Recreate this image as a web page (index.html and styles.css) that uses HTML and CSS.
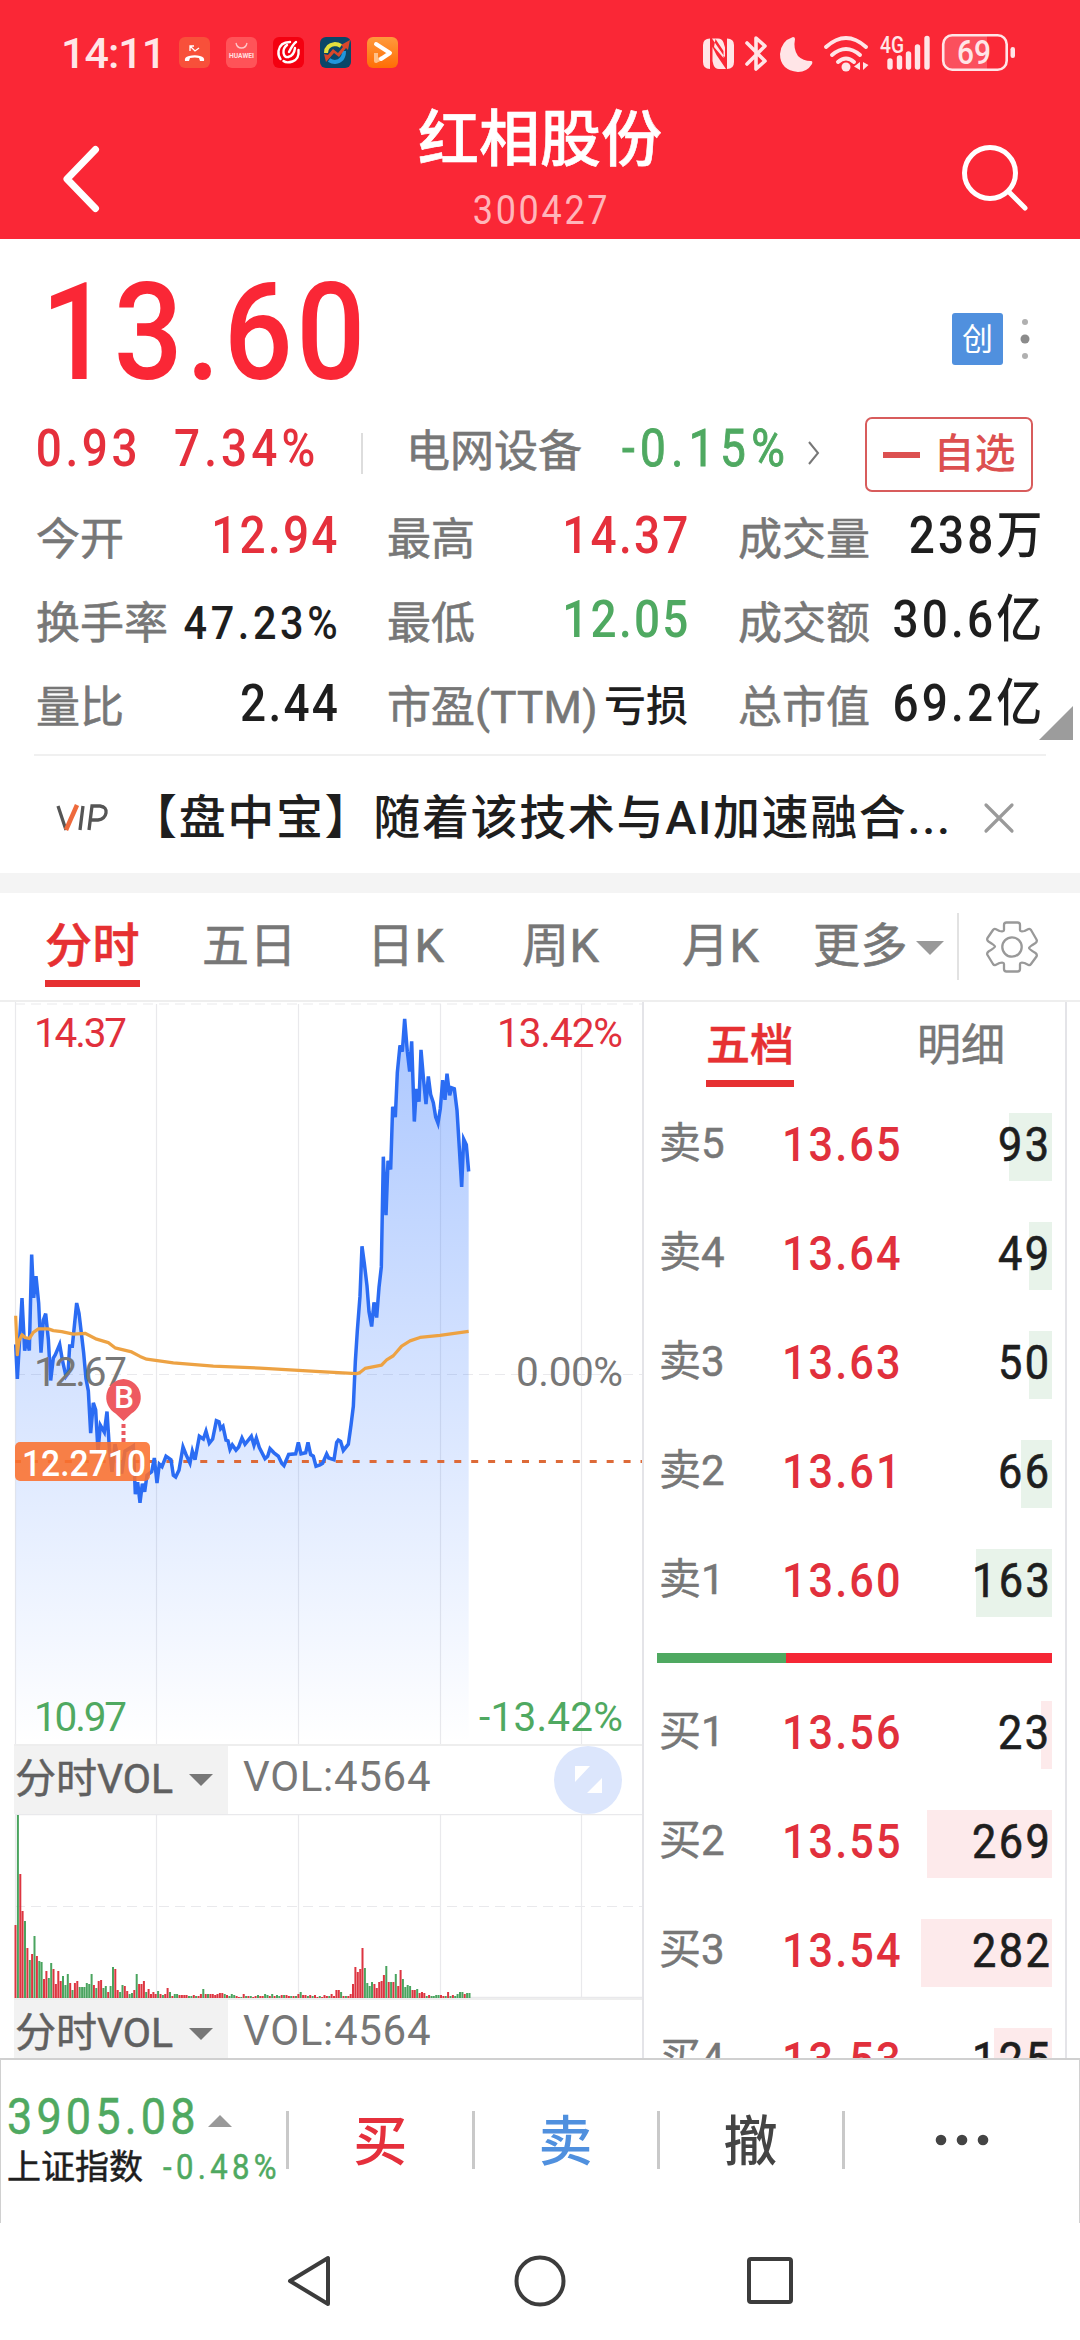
FILE: index.html
```html
<!DOCTYPE html>
<html lang="zh-CN">
<head>
<meta charset="utf-8">
<title>红相股份 300427</title>
<link rel="stylesheet" href="styles.css">
</head>
<body>
<div class="screen">
  <header class="header">
    <div class="status">
      <span class="clock">14:11</span>
      <div class="apps">
        <svg class="app" viewBox="0 0 31 31"><rect width="31" height="31" rx="6" fill="#f8503a"/><path d="M11 14V9h4M11 9l5 5 4-3" fill="none" stroke="#fff" stroke-width="1.3"/><path d="M6 24q-1-4 4-5 6-1.500 11 0 5 1 4 5h-4l-1-3q-4-1-9 0l-1 3z" fill="#fff"/></svg>
        <svg class="app" viewBox="0 0 31 31"><rect width="31" height="31" rx="6" fill="#ff5358"/><path d="M10 6q1 5 5.500 5T21 6" fill="none" stroke="#ffc5c7" stroke-width="1.300"/><text x="3" y="20.500" class="brand" textLength="25" lengthAdjust="spacingAndGlyphs">HUAWEI</text></svg>
        <svg class="app" viewBox="0 0 31 31"><rect width="31" height="31" rx="6" fill="#f40010"/><path d="M17 5Q7 5 5.500 14q-.5 5 2 8M14 8q-4 3-3.500 8 1 5 5 4M23 5q-3 2-7 10M15 20q6-1 7-9M25.500 13q1 9-6 11.500-6 2-9-.5" fill="none" stroke="#fff" stroke-width="2.400" stroke-linecap="round"/></svg>
        <svg class="app" viewBox="0 0 31 31"><rect width="31" height="31" rx="6" fill="#0b4668"/><path d="M6 16q0-8 9-9 3 0 6 2" fill="none" stroke="#e3df3e" stroke-width="4"/><path d="M24 14q0 10-9 11-3 0-6-2" fill="none" stroke="#2196dc" stroke-width="4"/><path d="M4 17l4 1 5-6 5 4 5-6-2-2 9-5-2 10-2-2-7 9-5-4-8 9z" fill="#d8472b"/></svg>
        <svg class="app" viewBox="0 0 31 31"><defs><linearGradient id="play" x2="0" y2="1"><stop stop-color="#ff9a3c"/><stop offset="1" stop-color="#ff6d05"/></linearGradient></defs><rect width="31" height="31" rx="6" fill="url(#play)"/><path d="M9 16v8l6-3" fill="none" stroke="#ffc08a" stroke-width="4" stroke-linejoin="round"/><path d="M9 7l14 9-9 6" fill="none" stroke="#fff" stroke-width="4" stroke-linejoin="round" stroke-linecap="round"/></svg>
      </div>
      <svg class="indicators" viewBox="703 30 316 44" fill="#ffe5e7">
        <path d="M710 37.500V68q-7 0-7-7V44q0-6.500 7-6.500zM727 68V37.500q7 0 7 6.500v17q0 7-7 7zM712 37.500h6q4 0 5.500 4l1.500 5v10zM725.500 68h-6.500q-4 0-5.500-4l-1-4V46l4 8 9.500 14zM714 46l9.500 11v-7l-8-12z"/>
        <path d="M747 42l18 18-9 8V37l9 8-18 18" fill="none" stroke="#ffe5e7" stroke-width="3.600" stroke-linejoin="round" stroke-linecap="round"/>
        <path d="M793 36q2 0 2 2-2 10 3 17 5 5 13 5 2 0 1 3-5 8-14 8-18-2-18-18 1-13 13-17z"/>
        <path d="M826 46q20-18 40 0M832 54q14-12 28 0M838 61q8-7 16 0" fill="none" stroke="#ffe5e7" stroke-width="4" stroke-linecap="round"/><circle cx="846" cy="66" r="4.500"/><path d="M860 61v8l-6-3.500zM863 61v8l5.500-5z"/>
        <text x="880" y="52" class="net" textLength="24" lengthAdjust="spacingAndGlyphs">4G</text>
        <path d="M890 60v6M899.500 57v9M908.500 53v13M917.500 46v20M927 37.500V66" stroke="#ffe5e7" stroke-width="5.400" stroke-linecap="round"/>
        <path d="M951 34h36v35h-36q-7 0-7-8V42q0-8 7-8z" fill-opacity=".22"/>
        <rect x="943.200" y="34.200" width="63.500" height="34.600" rx="9" fill="none" stroke="#ffe5e7" stroke-width="2.600"/>
        <rect x="1010.500" y="46" width="4.500" height="11" rx="2.200"/>
        <text x="957" y="62.500" class="battery" textLength="34" lengthAdjust="spacingAndGlyphs">69</text>
      </svg>
    </div>
    <div class="titlebar">
      <svg class="back" viewBox="0 0 37 66"><path d="M33.500 3.500 5 33l28.500 29.500" fill="none" stroke="#fff" stroke-width="7" stroke-linecap="round" stroke-linejoin="round"/></svg>
      <div class="titles"><h1>红相股份</h1><p>300427</p></div>
      <svg class="search" viewBox="0 0 66 68"><circle cx="28" cy="29" r="25.500" fill="none" stroke="#fff" stroke-width="5"/><path d="M47 48l16 16" stroke="#fff" stroke-width="5" stroke-linecap="round"/></svg>
    </div>
  </header>

  <section class="quote">
    <div class="price-row">
      <div class="price"><span>13.60</span></div>
      <span class="board">创</span>
      <svg class="more" viewBox="0 0 10 42"><circle cx="5" cy="4" r="3" fill="#b0b0b0"/><circle cx="5" cy="21" r="4.500" fill="#8b8b8b"/><circle cx="5" cy="38" r="3" fill="#b0b0b0"/></svg>
    </div>
    <div class="change-row">
      <span class="num up diff">0.93</span><span class="num up pct">7.34%</span><i class="sep"></i>
      <span class="sector">电网设备</span><span class="num down spct">-0.15%</span>
      <svg class="chev" viewBox="0 0 12 24"><path d="M1 1l9 11-9 11" fill="none" stroke="#777" stroke-width="2"/></svg>
      <button class="watch"><i></i>自选</button>
    </div>
    <div class="stats">
      <div><label>今开</label><b class="up">12.94</b></div>
      <div><label>最高</label><b class="up">14.37</b></div>
      <div><label>成交量</label><b class="cjk">238<em>万</em></b></div>
      <div><label>换手率</label><b class="small">47.23%</b></div>
      <div><label>最低</label><b class="down">12.05</b></div>
      <div><label>成交额</label><b class="cjk">30.6<em>亿</em></b></div>
      <div><label>量比</label><b>2.44</b></div>
      <div><label>市盈<span class="ttm">(TTM)</span></label><b class="loss">亏损</b></div>
      <div><label>总市值</label><b class="cjk">69.2<em>亿</em></b></div>
      <i class="expand"></i>
    </div>
  </section>

  <section class="news">
    <svg class="vip" viewBox="0 0 54 28"><path d="M2 2l8 24M27 2l-3 24M33 26l3-24h8q7 1 6 7t-8 7h-8" fill="none" stroke="#555" stroke-width="3.300"/><path d="M10 26L21 1" stroke="#ee6a3c" stroke-width="4.500"/></svg>
    <p>【盘中宝】随着该技术与AI加速融合...</p>
    <svg class="close" viewBox="0 0 30 30"><path d="M2 2l26 26M28 2L2 28" stroke="#9a9a9a" stroke-width="3.200" stroke-linecap="round"/></svg>
  </section>

  <nav class="tabs">
    <span class="active">分时</span><span>五日</span><span>日K</span><span>周K</span><span>月K</span><span class="moretab">更多<i></i></span>
    <div class="gear"><svg viewBox="-26 -26 52 52" fill="none" stroke="#999" stroke-width="2.300" stroke-linejoin="round"><path d="M-8-22q0-2.500 2.500-2.500h11Q8-24.500 8-22v5q0 2 4.500 1l4-2q1.500-.5 2.500 1l5.500 9.500q1 2-1 3.500-6.500 4-6.500 5t6.500 5q2 1.500 1 3.500L19 17q-1 1.500-2.500 1l-4-2Q8 15 8 17v5q0 2.500-2.500 2.500h-11Q-8 24.500-8 22v-5q0-2-4.500-1l-4 2q-1.500.5-2.500-1l-5.500-9q-1-2 1-3.500 6.500-4 6.500-5t-6.500-5q-2-1.500-1-3.500L-19-17q1-1.500 2.500-1l4 2q4.500 1 4.500-1z"/><circle r="9.700"/></svg></div>
  </nav>

  <main class="board-area">
    <div class="charts">
      <svg class="timeline" viewBox="0 1001 643 743">
        <defs><linearGradient id="fade" gradientUnits="userSpaceOnUse" x1="0" y1="53" x2="0" y2="2158"><stop stop-color="#2970ff" stop-opacity=".39"/><stop offset="1" stop-color="#2970ff" stop-opacity="0"/></linearGradient></defs>
        <g stroke="#e9e9ec" stroke-width="1.200" fill="none"><path d="M15.500 1001v743M156.500 1004v740M298.500 1004v740M440.500 1004v740M581.500 1004v740"/><path d="M15 1004h627M15 1374.500h627" stroke-dasharray="10 6"/></g>
        <g transform="translate(0 1000) scale(.33333 .34436)">
          <path id="area" fill="url(#fade)"/>
          <path d="M46 1340h1880" stroke="#dd6a38" stroke-width="9" stroke-dasharray="21 29.800" stroke-dashoffset="4"/>
          <path id="line" fill="none" stroke="#2b6cf3" stroke-width="10.500"/>
          <path d="M47 917 52 1030 57 990 66 972 75 980 88 983 100 965 115 955 145 955 160 960 185 963 220 970 255 968 290 985 325 995 345 1010 395 1022 420 1035 440 1043 520 1054 640 1063 780 1069 960 1079 1070 1085 1078 1083 1095 1070 1145 1060 1160 1045 1180 1033 1205 1005 1230 990 1260 980 1320 974 1406 962" fill="none" stroke="#eda243" stroke-width="9.500" stroke-linejoin="round"/>
        </g>
        <g class="axis">
          <text x="34" y="1047" fill="#e1303c" textLength="93">14.37</text><text x="497" y="1047" fill="#e1303c" textLength="126">13.42%</text>
          <text x="34" y="1386" fill="#777" textLength="93">12.67</text><text x="516" y="1386" fill="#777" textLength="107">0.00%</text>
          <text x="34" y="1731" fill="#4fa961" textLength="93">10.97</text><text x="479" y="1731" fill="#4fa961" textLength="144">-13.42%</text>
        </g>
        <path d="M123.500 1424v20" stroke="#ea5960" stroke-width="4" stroke-dasharray="4 3"/>
        <path d="M123.500 1379a18.500 18.500 0 0 1 8 34.500l-8 7.500-8-7.500a18.500 18.500 0 0 1 8-34.500z" fill="#ee5a60"/>
        <text x="114" y="1408" class="buy" textLength="20" lengthAdjust="spacingAndGlyphs">B</text>
        <rect x="15" y="1442" width="135" height="39" rx="5" fill="#fb6f2e" fill-opacity=".88"/>
        <text x="22" y="1476" class="cost" textLength="124" lengthAdjust="spacingAndGlyphs">12.2710</text>
      </svg>
      <div class="volhead"><span class="pick">分时VOL<i></i></span><span class="volval">VOL:4564</span>
        <svg class="fullscreen" viewBox="0 0 68 68"><circle cx="34" cy="34" r="34" fill="#dce6fc"/><path d="M21 20h15L21 36zM48 32v15H33z" fill="#fff"/></svg>
      </div>
      <svg class="volume" viewBox="0 1814 643 184">
        <g stroke="#e9e9ec" stroke-width="1.200" fill="none"><path d="M15.500 1814v184M156.500 1814v184M298.500 1814v184M440.500 1814v184M581.500 1814v184M15 1814.600h627"/><path d="M15 1906.500h627" stroke-dasharray="10 6"/><path d="M15 1997.400h627"/></g>
        <path id="fall" stroke="#4aa45f" stroke-width="2"/><path id="rise" stroke="#dd3541" stroke-width="2"/>
      </svg>
      <div class="volhead second"><span class="pick">分时VOL<i></i></span><span class="volval">VOL:4564</span></div>
    </div>
    <aside class="book">
      <div class="booktabs"><span class="on">五档</span><span>明细</span></div>
      <div class="lvl ask"><span>卖5</span><b>13.65</b><u style="--w:43px"><s>93</s></u></div>
      <div class="lvl ask"><span>卖4</span><b>13.64</b><u style="--w:23px"><s>49</s></u></div>
      <div class="lvl ask"><span>卖3</span><b>13.63</b><u style="--w:23px"><s>50</s></u></div>
      <div class="lvl ask"><span>卖2</span><b>13.61</b><u style="--w:31px"><s>66</s></u></div>
      <div class="lvl ask"><span>卖1</span><b>13.60</b><u style="--w:76px"><s>163</s></u></div>
      <div class="ratio"><i></i></div>
      <div class="lvl bid"><span>买1</span><b>13.56</b><u style="--w:11px"><s>23</s></u></div>
      <div class="lvl bid"><span>买2</span><b>13.55</b><u style="--w:125px"><s>269</s></u></div>
      <div class="lvl bid"><span>买3</span><b>13.54</b><u style="--w:131px"><s>282</s></u></div>
      <div class="lvl bid"><span>买4</span><b>13.53</b><u style="--w:58px"><s>125</s></u></div>
    </aside>
  </main>

  <footer class="trade">
    <div class="index"><div class="idx"><span>3905.08</span><i></i></div><div class="idxname">上证指数<span>-0.48%</span></div></div>
    <span class="act buytxt">买</span><span class="act selltxt">卖</span><span class="act">撤</span>
    <span class="act"><svg class="dots" viewBox="0 0 54 12" fill="#444"><circle cx="6" cy="3" r="5.300"/><circle cx="27" cy="3" r="5.300"/><circle cx="48" cy="3" r="5.300"/></svg></span>
  </footer>
  <div class="sysnav">
    <svg viewBox="0 0 480 56" fill="none" stroke="#3c3c3c" stroke-width="4" stroke-linejoin="round"><path d="M5 28 43 5v46z"/><circle cx="255" cy="28" r="23.500"/><rect x="464" y="6" width="42" height="43" rx="2"/></svg>
  </div>
</div>
<script src="chart.js"></script>
</body>
</html>
```
FILE: styles.css
```css
* { box-sizing: border-box; }
body { margin: 0; background: #fff; font-family: Roboto, "Noto Sans CJK SC", sans-serif; color: #1e1e1e; }
svg { display: block; flex: none; overflow: visible; }
i, em { font-style: normal; }
.screen { width: 1080px; height: 2340px; overflow: hidden; display: flex; flex-direction: column; background: #fff; }
.up { color: #e5303c; }
.down { color: #4fa961; }

.header { height: 239px; flex: none; background: #fa2736; color: #fff; }
.status { height: 105px; display: flex; align-items: center; padding: 0 61px; }
.clock { width: 118px; font-size: 43px; font-weight: 500; color: #ffe5e7; letter-spacing: -1px; }
.apps { display: flex; gap: 16px; flex: 1; }
.app { width: 31px; height: 31px; }
.brand { font-size: 6.500px; font-weight: 700; fill: #ffe0e0; }
.indicators { width: 316px; height: 44px; }
.net { font-size: 23px; font-weight: 500; }
.battery { font-size: 33px; font-weight: 500; }
.titlebar { height: 134px; display: flex; justify-content: space-between; padding: 0 52px 0 62px; }
.back { width: 37px; height: 66px; margin-top: 41px; }
.titles { text-align: center; margin-left: 19px; }
h1 { margin: 0; font-size: 61px; line-height: 70px; font-weight: 500; -webkit-text-stroke: .6px; }
.titles p { margin: 12px 0 0; font-size: 40px; line-height: 48px; letter-spacing: 3px; margin-right: -3px; color: #ffb5ba; transform: scaleX(.9); }
.search { width: 66px; height: 68px; margin-top: 39px; }

/* Numerals are set narrow and tracked out */
.price span, .num, .stats b, .lvl b, .lvl s, .idx span, .idxname span { display: inline-block; transform: scaleX(.9); transform-origin: left; white-space: nowrap; }

.quote { height: 517px; flex: none; margin: 0 34px; border-bottom: 2px solid #f0f0f0; }
.price-row { height: 171px; padding-top: 17px; display: flex; align-items: center; }
.price { flex: 1; padding-left: 7px; font-size: 135px; line-height: 150px; font-weight: 500; letter-spacing: 4px; color: #fa2736; }
.board { width: 51px; height: 52px; border-radius: 3px; background: #5090de; color: #fff; font-size: 31px; line-height: 54px; text-align: center; margin: 11px 17px 0 0; }
.more { width: 10px; height: 42px; margin: 11px 16px 0 0; }
.change-row { height: 86px; display: flex; align-items: center; }
.num { font-size: 51px; line-height: 60px; font-weight: 500; padding-bottom: 6px; margin-top: -2px; }
.diff { width: 140px; padding-left: 2px; letter-spacing: 4px; }
.pct { width: 187px; letter-spacing: 4.600px; }
.sep { width: 2px; height: 41px; background: #ddd; margin-right: 43px; }
.sector { width: 216px; font-size: 44px; line-height: 60px; color: #777; -webkit-text-stroke: .6px; margin-top: -2px; }
.spct { width: 183px; font-weight: 400; -webkit-text-stroke: .9px; letter-spacing: 6px; }
.chev { width: 12px; height: 24px; margin: 0 45px 0 3px; }
.watch { width: 168px; height: 75px; border: 2px solid #d85c5c; border-radius: 7px; background: #fff; color: #dc5050; font: 500 41px/71px Roboto, "Noto Sans CJK SC", sans-serif; padding: 0; margin-top: 3px; display: flex; align-items: center; justify-content: center; gap: 14px; }
.watch i { width: 37px; height: 6px; background: #dc5050; }
.stats { position: relative; display: grid; grid-template-columns: repeat(3, 300px); grid-auto-rows: 84px; column-gap: 51px; padding: 1px 0 0 2px; }
.stats > div { display: flex; justify-content: space-between; align-items: center; white-space: nowrap; }
.stats label { font-size: 44px; line-height: 60px; color: #777; -webkit-text-stroke: .6px; padding-top: 2px; }
.stats b { font-size: 51px; line-height: 60px; font-weight: 500; padding-bottom: 6px; margin-right: -4px; letter-spacing: 2.500px; transform-origin: right; }
.stats b.small { font-size: 46px; padding-bottom: 0; letter-spacing: 4px; margin-left: -20px; margin-right: -5px; }
.stats b.cjk { margin-left: -20px; letter-spacing: 3.500px; }
.stats b.loss { font-size: 42px; padding-bottom: 0; letter-spacing: 0; transform: none; margin-right: -1px; }
.stats em { font-size: 51px; letter-spacing: 0; }
.ttm { letter-spacing: .2px; }
.expand { position: absolute; right: -27px; bottom: 9px; border-left: 34px solid transparent; border-bottom: 34px solid #9c9c9c; }

.news { height: 117px; flex: none; display: flex; align-items: center; padding: 6px 66px 0 56px; }
.vip { width: 54px; height: 28px; }
.news p { flex: 1; margin: 0 0 0 20px; font-size: 47px; line-height: 60px; font-weight: 500; letter-spacing: 1.650px; white-space: nowrap; }
.close { width: 30px; height: 30px; }

.tabs { height: 129px; flex: none; border-top: 20px solid #f4f4f4; border-bottom: 2px solid #eee; display: grid; grid-template-columns: 157px 165px 155px 160px 131px 144px 1fr; padding-left: 45px; font-size: 47px; line-height: 106px; letter-spacing: .5px; color: #777; -webkit-text-stroke: .6px; }
.tabs span { height: 94px; justify-self: start; white-space: nowrap; }
.tabs .active { color: #e63032; font-weight: 500; border-bottom: 7px solid #e63032; }
.tabs .moretab { display: flex; align-items: center; gap: 8px; height: 106px; }
.moretab i { border: 14px solid transparent; border-top-color: #999; border-bottom: 0; margin-top: 4px; }
.gear { height: 67px; margin-top: 20px; border-left: 2px solid #e2e2e2; padding: 8px 0 0 27px; }
.gear svg { width: 52px; height: 52px; }

.board-area { height: 1056px; flex: none; overflow: hidden; display: flex; }
.charts { width: 642px; }
.timeline { width: 643px; height: 743px; margin-top: -1px; }
.axis { font-size: 40.500px; stroke-width: .5px; }
.buy { font-size: 31px; font-weight: 500; fill: #fff; }
.cost { font-size: 37px; font-weight: 500; fill: #fff; }
.volhead { height: 70px; margin-left: 14px; border-top: 2px solid #eee; display: flex; align-items: center; position: relative; }
.pick { width: 214px; height: 68px; background: #f2f2f2; font-size: 41px; line-height: 64px; color: #606060; -webkit-text-stroke: .5px; padding: 0 0 3px 1px; display: flex; align-items: center; white-space: nowrap; letter-spacing: 0; }
.pick i { border: 12px solid transparent; border-top-color: #777; border-bottom: 0; margin-left: 16px; margin-top: 3px; }
.volval { margin-left: 15px; font-size: 42px; line-height: 60px; color: #777; padding-bottom: 7px; letter-spacing: .7px; }
.fullscreen { width: 68px; height: 68px; position: absolute; left: 540px; top: 0; }
.volume { width: 643px; height: 184px; }

.book { width: 425px; border: solid #e4e4e8; border-width: 0 2px; padding: 0 13px; }
.booktabs { height: 86px; margin-bottom: 4px; display: flex; font-size: 44px; line-height: 88px; color: #777; -webkit-text-stroke: .5px; }
.booktabs span { height: 85px; margin-left: 49px; }
.booktabs .on { color: #e63032; font-weight: 500; border-bottom: 7px solid #e63032; }
.booktabs span + span { margin-left: 123px; }
.lvl { height: 109px; display: grid; grid-template-columns: 123px 130px 1fr; align-items: center; padding-left: 2px; }
.lvl span { font-size: 42px; line-height: 60px; padding-bottom: 6px; color: #777; -webkit-text-stroke: .5px; }
.lvl b { font-size: 48px; font-weight: 500; color: #e1303c; line-height: 68px; padding-bottom: 4px; letter-spacing: 2.300px; }
.lvl u { text-decoration: none; text-align: right; font-size: 48px; line-height: 64px; height: 68px; -webkit-text-stroke: .7px; background: linear-gradient(#e8f3ea, #e8f3ea) right / var(--w) 100% no-repeat; }
.lvl s { text-decoration: none; transform-origin: right; letter-spacing: 2.800px; }
.bid u { background-image: linear-gradient(#fdeaeb, #fdeaeb); }
.ratio { height: 10px; margin: 16px 0 17px; background: #f52735; }
.ratio i { display: block; width: 129px; height: 10px; background: #4fa961; }

.trade { height: 165px; flex: none; border: 2px solid #d0d0d0; border-width: 2px 1px 0; display: grid; grid-template-columns: 285px 185.500px 185px 185px 1fr; }
.index { padding: 27px 0 0 6px; white-space: nowrap; }
.idx { display: flex; align-items: center; height: 60px; font-size: 50px; line-height: 60px; color: #4fa961; }
.idx span { width: 189px; letter-spacing: 4.600px; -webkit-text-stroke: .5px; }
.idx i { border: 12px solid transparent; border-bottom-color: #999; border-top: 0; margin: 7px 0 0 12px; }
.idxname { display: flex; font-size: 34px; line-height: 40px; -webkit-text-stroke: .5px; }
.idxname span { margin-left: 20px; font-size: 34.500px; color: #4fa961; letter-spacing: 4.800px; }
.act { display: flex; align-items: center; justify-content: center; height: 58px; margin-top: 51px; padding-top: 6px; font-size: 54px; font-weight: 500; color: #444; border-left: 3px solid #c9c9c9; line-height: 58px; }
.buytxt { color: #e5303c; }
.selltxt { color: #5090de; }
.dots { width: 54px; height: 12px; }
.sysnav { flex: 1; padding: 30px 0 0 285px; }
.sysnav svg { width: 480px; height: 56px; }
```
FILE: chart.js
```javascript
// Price line samples, x/y pairs in thirds of a pixel
const price = `47,1000 52,1100 66,866 74,1018 80,985 88,1018 95,739 101,865 108,802 116,880 123,1024 130,930 137,911 145,985 152,1105 160,1040 166,1030 179,1000 187,1045 198,1093 204,1085 209,1005 217,1005 230,880 237,910 245,975 251,1025 258,1100 265,1135 272,1258 280,1170 287,1190 294,1310 301,1235 313,1255 321,1195 328,1300 336,1370 345,1290 365,1375 375,1310 392,1300 400,1295 406,1435 413,1400 420,1460 427,1405 434,1428 441,1380 455,1370 463,1330 471,1403 478,1348 486,1355 498,1325 513,1335 520,1380 527,1385 537,1365 549,1298 558,1320 570,1345 577,1310 585,1335 598,1267 610,1275 618,1252 628,1287 638,1275 649,1222 657,1225 662,1245 669,1238 678,1278 684,1280 690,1305 697,1292 708,1307 716,1298 726,1272 735,1290 745,1278 754,1267 762,1293 769,1272 778,1300 795,1332 803,1325 810,1303 822,1315 835,1325 845,1345 852,1352 866,1320 887,1318 895,1285 903,1318 917,1315 924,1285 932,1320 940,1325 948,1354 960,1350 968,1345 980,1318 986,1330 1002,1335 1010,1285 1015,1278 1022,1282 1030,1308 1045,1290 1053,1235 1060,1180 1066,1050 1072,960 1080,860 1086,715 1093,765 1101,830 1107,905 1115,948 1122,878 1130,922 1137,835 1144,775 1150,455 1158,625 1164,467 1172,492 1178,310 1186,340 1192,210 1200,132 1207,150 1214,55 1222,150 1229,208 1235,120 1243,353 1249,258 1257,295 1263,145 1271,235 1278,302 1285,222 1292,275 1300,298 1307,340 1314,358 1321,315 1328,233 1335,290 1341,214 1349,277 1355,255 1363,258 1371,320 1378,430 1385,543 1391,404 1399,420 1406,498`;
document.getElementById('line').setAttribute('d', 'M' + price);
document.getElementById('area').setAttribute('d', 'M47,2158L' + price + 'L1406,2158z');

// One-minute volume bars: height in px, r = rise, g = fall
const volume = `73r 183g 124r 87r 77g 50r 38g 44r 62g 42r 37g 36g 19r 27r 20g 35g 29r 14r 27r 17r 22g 13g 24g 15r 8g 15r 17r 11g 11g 11g 15g 14g 24g 13r 10g 17r 18r 10g 12g 6r 12g 31g 29r 8r 6g 13g 12r 7r 4g 5g 8r 24g 14r 14r 17r 6g 9r 4r 6r 4r 7g 4r 3g 4r 10r 6g 2r 4g 4g 3r 3r 3r 3r 2g 2g 3r 2g 2r 4r 9g 4r 4g 4r 4r 3r 4r 5r 5r 4g 3r 2g 4g 3g 2r 1r 1g 4r 2g 2r 2g 1r 2r 3g 2r 2r 4g 3g 2r 4g 2r 3g 2g 3r 3g 3r 2r 2g 2r 2g 4r 6g 3r 3r 2g 3r 2g 3r 1r 2g 1r 3r 2r 2g 4r 2r 8r 8r 6g 2r 2g 2r 4r 14r 31r 26r 29r 50r 30g 15g 12g 16g 14r 10r 16r 17r 23r 32g 16r 16g 16r 24g 12r 28r 19g 11g 13g 12g 8r 8r 9g 5r 6r 5r 2g 3r 2g 2g 3g 3g 3r 2r 2g 6r 2g 3r 2g 4g 6g 6g 4r 5g 5g`.split(' ');
const bars = { r: '', g: '' };
volume.forEach((v, i) => {
  bars[v.slice(-1)] += 'M' + (15.5 + i * 454 / (volume.length - 1)).toFixed(1) + ' 1998v-' + parseInt(v, 10);
});
document.getElementById('rise').setAttribute('d', bars.r);
document.getElementById('fall').setAttribute('d', bars.g);
```
